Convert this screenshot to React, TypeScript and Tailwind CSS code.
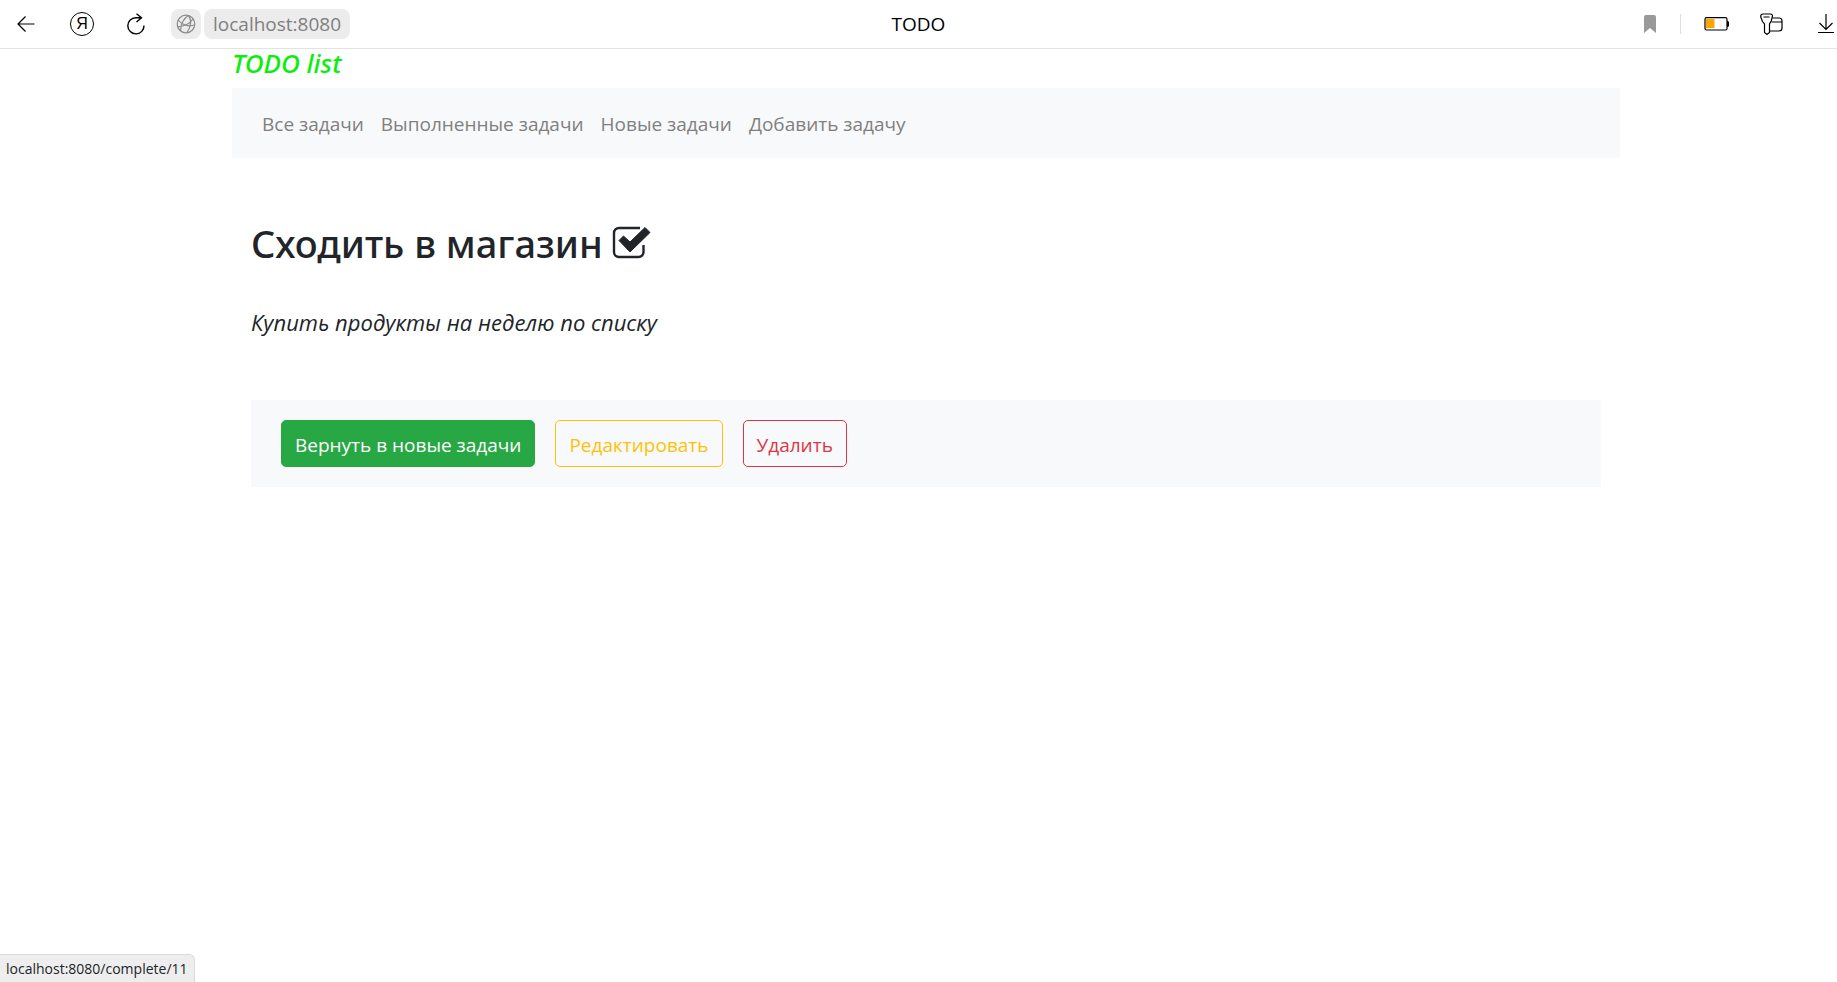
import React from 'react';

const navLinks = [
  { label: 'Все задачи', href: '#all' },
  { label: 'Выполненные задачи', href: '#completed' },
  { label: 'Новые задачи', href: '#new' },
  { label: 'Добавить задачу', href: '#add' },
];

function BackIcon() {
  return (
    <svg width="18" height="16" viewBox="0 0 18 16" fill="none" stroke="#000" strokeWidth="1.2">
      <path d="M17.5 8H1M8.5 .5L1 8l7.500 7.500" />
    </svg>
  );
}

function ReloadIcon() {
  return (
    <svg width="18" height="22" viewBox="0 0 18 22" fill="none" stroke="#000" strokeWidth="1.400">
      <path d="M17 12.500A8.100 8.100 0 1 1 9 4.700h5.500M9.500 .7l5 4-5 4.300" />
    </svg>
  );
}

function GlobeIcon() {
  return (
    <svg width="20" height="20" viewBox="0 0 20 20" fill="none" stroke="#8c8c8c" strokeWidth="1.200">
      <circle cx="10" cy="10" r="8.800" />
      <path d="M12.500 1.500C8 4 4.500 10 4.500 17M12.500 1.500c3 3.500 3 11-1.500 17M2 6c4 5 11 7 16.500 5M1.500 12.500C7 13 14 10 17 5" />
    </svg>
  );
}

function BatteryIcon() {
  return (
    <svg width="26" height="14" viewBox="0 0 26 14" fill="none">
      <rect x="1" y=".7" width="22" height="12.300" rx="1.500" stroke="#000" strokeWidth="1.200" />
      <rect x="2" y="2" width="8.500" height="9" fill="#ffa500" />
      <path d="M23 4h1l1 1v4l-1 1h-1z" fill="#000" />
    </svg>
  );
}

function KeyIcon() {
  return (
    <svg width="23" height="23" viewBox="0 0 23 23" fill="none" stroke="#000" strokeWidth="1.200">
      <path d="M3 1h7.500c1.500 0 2.300 1.200 1.900 2.500L11.200 8 9.500 11v8.500L7 21.500 4.500 19.500V11L2.500 8.500.8 4C.5 2.400 1.300 1 3 1zM3.500 4h6" />
      <path d="M12.500 5H19c2 0 3 1 3 3v7c0 2-1 3-3 3h-9M11.500 9H22" />
    </svg>
  );
}

function CheckedBoxIcon() {
  return (
    <svg width="39" height="34" viewBox="0 0 39 34" fill="none" role="img" aria-label="Выполнено">
      <path
        d="M28 2H7a5 5 0 0 0-5 5v19a5 5 0 0 0 5 5h19.500a5 5 0 0 0 5-5v-7"
        stroke="#212529"
        strokeWidth="2.400"
      />
      <path d="M7 14.500l4.500-4.500 6.500 6L33 1.500l5 5L18 26z" fill="#212529" stroke="#212529" strokeLinejoin="round" />
    </svg>
  );
}

export default function App() {
  return (
    <div className="flex min-h-screen flex-col bg-white font-['Open_Sans','Noto_Sans',sans-serif] text-[#212529]">
      <header className="grid h-[49px] grid-cols-[1fr_auto_1fr] items-center border-b border-[#e3e3e3]">
        <div className="flex items-center pl-[17px]">
          <button aria-label="Назад"><BackIcon /></button>
          <button
            aria-label="Яндекс"
            className="ml-[35px] flex size-6 items-center justify-center rounded-full border border-black font-['Liberation_Sans',sans-serif] text-base leading-4 text-black"
          >
            Я
          </button>
          <button aria-label="Обновить" className="ml-[33px]"><ReloadIcon /></button>
          <button aria-label="О сайте" className="ml-[26px] flex size-[30px] items-center justify-center rounded-lg bg-[#ececec]">
            <GlobeIcon />
          </button>
          <button className="ml-[3px] h-[30px] rounded-lg bg-[#ececec] px-[9px] text-[19px] leading-[30px] text-[#808080]">
            localhost:8080
          </button>
        </div>
        <div className="text-[19px] leading-6 text-black">TODO</div>
        <div className="flex items-center justify-end">
          <button aria-label="Закладка">
            <svg width="12" height="18" viewBox="0 0 12 18"><path d="M2 0h8a2 2 0 0 1 2 2v16l-6-5-6 5V2a2 2 0 0 1 2-2z" fill="#999" /></svg>
          </button>
          <div className="mr-[23px] ml-6 h-5 w-px bg-[#dedede]" />
          <button aria-label="Батарея"><BatteryIcon /></button>
          <button aria-label="Пароли" className="ml-[30px]"><KeyIcon /></button>
          <button aria-label="Загрузки" className="mr-[3px] ml-[35px]">
            <svg width="16" height="20" viewBox="0 0 16 20" fill="none" stroke="#000" strokeWidth="1.200">
              <path d="M8 0v15.500M1.500 9L8 15.500 14.500 9M0 18.500h16" />
            </svg>
          </button>
        </div>
      </header>

      <div className="pl-[15px]">
        <main className="mx-auto w-full max-w-[1388px]">
          <div className="font-['Noto_Sans',sans-serif] text-[26px] leading-7 font-medium text-[#0aef0a] italic">TODO list</div>
          <nav className="mt-[11px] flex h-[70px] items-center gap-[17px] bg-[#f8f9fa] px-[30px] pt-[2px] text-[19px] leading-[30px] text-[#808080]">
            {navLinks.map((link) => (
              <a key={link.href} href={link.href}>{link.label}</a>
            ))}
          </nav>

          <section className="px-[19px] pt-[61px]">
            <h1 className="flex items-center gap-[9px] font-['Noto_Sans',sans-serif] text-[38px] leading-12 font-medium">
              Сходить в магазин
              <CheckedBoxIcon />
            </h1>
            <p className="mt-[37px] text-[22px] leading-[36px] italic">Купить продукты на неделю по списку</p>
            <div className="mt-[60px] flex items-center gap-5 bg-[#f8f9fa] px-[30px] py-5 text-[19px] leading-[30px]">
              <button className="h-[47px] rounded-[5px] border border-[#28a745] bg-[#28a745] px-[13px] pt-[2px] text-white">
                Вернуть в новые задачи
              </button>
              <button className="h-[47px] rounded-[5px] border border-[#ffc107] px-[13px] pt-[2px] text-[#ffc107]">Редактировать</button>
              <button className="h-[47px] rounded-[5px] border border-[#dc3545] px-[13px] pt-[2px] text-[#dc3545]">Удалить</button>
            </div>
          </section>
        </main>
      </div>

      <footer className="mt-auto flex">
        <div className="rounded-tr-md border-t border-r border-[#dadada] bg-[#eee] pr-[6px] pl-[6px] text-sm leading-[27px]">
          localhost:8080/complete/11
        </div>
      </footer>
    </div>
  );
}
